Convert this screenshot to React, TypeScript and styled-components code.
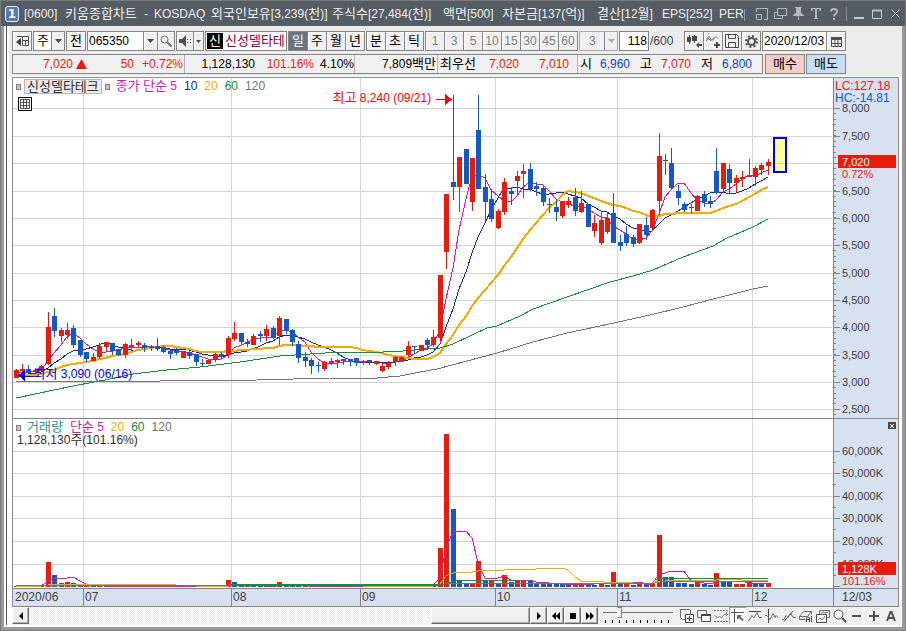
import React from "react";
import styled, { createGlobalStyle, css } from "styled-components";

const RED = "#e81c0c";
const BLUE = "#1458c8";
const MAGENTA = "#d818b0";
const NAVY = "#1428a0";
const AMBER = "#f0ac00";
const GREEN = "#109038";
const GREY = "#747474";
const LINE = "#848484";
const GRID = "#d4d4d4";
const AXIS_BG = "#d7e1ef";

const Global = createGlobalStyle`
  * { box-sizing: border-box; }
  body { margin: 0; }
  body, button, input, select {
    font: 12px/16px "Liberation Sans", "Noto Sans CJK KR", sans-serif;
    color: #000;
  }
  button, input, select { margin: 0; padding: 0; border-radius: 0; }
  svg { display: block; flex: none; }
`;

/* Hangul is set one size up, so that it stands level with the figures. */
const Hangul = styled.span`
  font-size: 13px;
  line-height: 1;
`;
const Mixed = ({ children }: { children: string }) => (
  <span>
    {children.split(/([가-힣]+)/).map((part, i) => (i % 2 ? <Hangul key={i}>{part}</Hangul> : part))}
  </span>
);

/* ---------- data ---------- */

// [direction, high, body top, body bottom, low] on the chart's vertical scale
type Candle = [string, number, number, number, number];
const candles: Candle[] = `
R 369 370 378 378;R 364 369 371 372;B 365 369 373 373;R 368 370 372 372;R 365 366 371 371;R 312 327 364 365
B 308 316 331 337;R 328 330 336 342;R 323 330 335 339;B 325 328 345 348;B 340 340 355 357;B 352 352 359 362
R 353 357 361 361;R 343 346 357 359;R 342 342 347 352;B 343 343 351 355;B 349 349 355 356;R 343 344 355 358
R 339 345 347 350;R 341 343 345 347;B 343 345 348 352;B 345 347 348 351;B 338 346 349 351;B 345 347 352 353
B 350 351 354 359;B 348 350 353 355;R 351 351 358 358;B 350 352 356 359;B 354 354 362 366;B 359 363 364 367
R 359 360 364 364;R 353 354 360 362;B 352 354 357 359;R 336 338 355 358;R 322 333 339 341;B 333 333 342 344
B 339 342 344 347;R 334 336 345 345;B 331 334 336 342;R 325 329 336 341;B 326 328 338 339;R 316 318 336 345
B 319 319 331 334;B 329 330 342 346;B 341 344 358 363;B 352 357 361 367;B 358 360 366 374;B 362 365 366 372
R 361 362 369 371;R 358 361 363 365;R 359 360 362 368;B 359 359 361 365;B 359 359 361 366;B 358 358 363 366
R 360 361 363 365;B 360 360 362 365;R 361 361 364 365;R 364 366 371 372;R 361 363 367 369;R 356 357 362 366
R 356 357 362 362;R 341 346 355 357;B 346 346 347 354;R 345 345 351 351;B 338 340 345 350;R 330 337 345 347
R 275 275 338 344;R 194 194 252 269;B 95 182 187 200;R 157 157 187 212;B 149 149 184 184;R 158 158 202 211
B 95 130 189 189;B 174 187 202 221;B 189 199 219 222;R 209 211 228 229;R 178 182 212 215;B 187 191 194 205
R 171 176 181 195;R 164 171 174 198;B 163 169 189 191;B 182 186 189 196;B 186 188 202 206;B 198 204 205 213
B 200 207 212 221;R 201 201 216 218;R 197 201 205 208;B 188 197 211 216;R 191 203 212 213;B 204 204 227 227
R 215 223 231 237;R 212 220 243 245;R 213 218 232 234;B 193 213 243 243;B 235 242 246 251;B 226 234 243 246
B 235 237 244 247;R 224 224 243 244;B 217 225 235 240;R 209 210 228 231;R 133 156 201 215;B 154 160 161 175
B 148 163 188 189;B 185 191 198 205;B 202 204 210 212;R 204 207 208 214;R 195 196 211 211;B 191 194 202 207
B 196 201 204 208;B 148 171 193 194;R 163 163 189 192;B 164 169 183 193;R 175 178 183 193;R 171 177 179 187
R 159 176 177 177;R 166 168 177 186;R 163 165 170 175;R 159 162 166 175`
  .trim()
  .split(/[;\n]/)
  .map((s) => {
    const [d, ...n] = s.trim().split(" ");
    return [d, ...n.map(Number)] as Candle;
  });

// bar height per day; a negative value is a day with less volume than the one before
const volumes = [
  -1, -1, 1, -1, 1, 25, -12, -4, 5, -4, -3, 1, -1, 1, -1, 3, -1, -1, -1, 1, -1, -1, 1, -1, -1, -1, 1, -1, 1, -1,
  -1, 1, 1, 7, -5, -1, 2, -1, -1, 2, -1, 5, -2, -1, -1, 1, 1, -1, -1, 1, -1, -1, 1, -1, 1, -1, -1, 1, 1, -1,
  1, 2, -1, -1, 1, 3, 39, 153, -78, -7, -4, 3, 26, -6, 6, -4, 12, -5, 6, 6, -6, -3, -3, -3, -4, -3, -2, 4, 4, -4,
  -2, 4, -2, 15, -3, 3, -2, 3, -3, 3, 52, -10, -10, -4, -4, -3, 5, -3, -2, 14, -6, -5, 3, 3, 5, -3, -3, 4,
];

const barX = (i: number) => Math.floor(16 + i * 6.43);

const average = (values: number[], n: number, before: number) =>
  values
    .map((_, i) => {
      let sum = 0;
      for (let k = 0; k < n; k++) sum += i - k >= 0 ? values[i - k] : before;
      return `${barX(i)},${Math.round(sum / n)}`;
    })
    .join(" ");

const closes = candles.map(([d, , top, bottom]) => (d === "R" ? top : bottom));
const volumeTops = volumes.map((v) => 587 - Math.abs(v));

const months = [
  { label: "2020/06", start: 13, span: 70 },
  { label: "07", start: 83, span: 148 },
  { label: "08", start: 231, span: 129 },
  { label: "09", start: 360, span: 135 },
  { label: "10", start: 495, span: 122 },
  { label: "11", start: 617, span: 135 },
  { label: "12", start: 752, span: 81 },
];

const priceGrid: [string, number][] = [
  ["8,000", 108], ["7,500", 136], ["7,000", 163], ["6,500", 191], ["6,000", 218], ["5,500", 245],
  ["5,000", 273], ["4,500", 300], ["4,000", 327], ["3,500", 355], ["3,000", 382], ["2,500", 409],
];
const volumeGrid: [string, number][] = [
  ["60,000K", 451], ["50,000K", 473], ["40,000K", 496], ["30,000K", 518], ["20,000K", 541], ["10,000K", 564],
];

/* ---------- window frame ---------- */

const Window = styled.div`
  min-height: 100vh;
  background: #9c9a98;
  border: 1px solid #7c7c7c;
  display: flex;
  flex-direction: column;
`;
const TitleBar = styled.header`
  height: 25px;
  background: #555c64;
  display: flex;
  align-items: center;
  padding: 0 3px 0 4px;
  color: #f0f0f0;
`;
const WindowNumber = styled.span`
  width: 14px;
  height: 16px;
  border: 1px solid #e8ecf4;
  border-radius: 3px;
  background: #5878b8;
  font: bold 12px/14px "DejaVu Sans", sans-serif;
  text-align: center;
  color: #fff;
`;
const TitleText = styled.h1`
  flex: 1;
  min-width: 0;
  height: 18px;
  margin: 0 10px 0 5px;
  overflow: hidden;
  display: grid;
  grid-template-columns: 41px 79px 10px 57px 121px 111px 59px 95px 65px 57px 60px;
  font-size: 12px;
  line-height: 18px;
  font-weight: normal;
  white-space: nowrap;
`;
const WindowButtons = styled.div`
  display: flex;
  align-items: center;
  gap: 4px;
`;
const Bare = styled.button`
  border: 0;
  background: none;
  display: grid;
  place-items: center;
  width: 14px;
  height: 18px;
`;
const TitleDivider = styled.span`
  width: 1px;
  height: 14px;
  background: #8a9096;
  margin: 0 1px;
`;
const Body = styled.main`
  flex: 1;
  margin: 0 3px 3px;
  border-left: 2px solid #fff;
  background: #fff;
`;
const Inner = styled.div`
  border-left: 1px solid #585858;
  padding-left: 2px;
`;

/* ---------- tool bars ---------- */

const Bars = styled.div`
  background: #ececec;
  padding: 5px 3px 2px;
  display: grid;
  gap: 3px;
  margin-bottom: 1px;
`;
const Bar = styled.div`
  display: flex;
  height: 20px;
  white-space: nowrap;
`;
const Group = styled.div<{ $w?: number; $white?: boolean; $muted?: boolean }>`
  display: flex;
  flex: none;
  position: relative;
  ${(p) => p.$w && css`width: ${p.$w}px;`}
  margin-right: 1px;
  border: 1px solid ${(p) => (p.$muted ? "#a8a8a8" : LINE)};
  background: ${(p) => (p.$white ? "#fff" : "#f0f0f0")};
`;
const ToolButton = styled.button<{ $on?: boolean; $muted?: boolean; $w?: number }>`
  width: ${(p) => p.$w ?? 19}px;
  flex: none;
  border: 0;
  border-left: 1px solid ${LINE};
  box-shadow: inset 1px 1px 0 #fff;
  background: #f0f0f0;
  display: grid;
  place-items: center;
  color: ${(p) => (p.$muted ? "#808080" : "#000")};
  &:first-child { border-left: 0; width: ${(p) => (p.$w ?? 19) - 1}px; }
  ${(p) => p.$on && css`background: #687484; color: #fff; box-shadow: none;`}
`;
const Field = styled.input<{ $right?: boolean }>`
  flex: 1;
  min-width: 0;
  border: 0;
  padding: 0 1px;
  background: #fff;
  text-align: ${(p) => (p.$right ? "right" : "left")};
`;
const Select = styled.select<{ $muted?: boolean }>`
  appearance: none;
  width: 100%;
  border: 0;
  padding-left: ${(p) => (p.$muted ? 9 : 3)}px;
  font-size: ${(p) => (p.$muted ? 12 : 13)}px;
  background: ${(p) => (p.$muted ? "#f0f0f0" : "#fff")};
  color: ${(p) => (p.$muted ? "#808080" : "#000")};
  opacity: 1;
`;
const SelectArrow = styled.span`
  position: absolute;
  right: 0;
  top: 0;
  width: 13px;
  height: 18px;
  border-left: 1px solid ${LINE};
  background: #f0f0f0;
  display: grid;
  place-items: center;
  pointer-events: none;
`;
const Badge = styled.span`
  width: 16px;
  margin: 1px;
  background: #000;
  color: #fff;
  font-size: 13px;
  text-align: center;
`;
const StockName = styled.span`
  flex: 1;
  color: #800040;
  font-size: 13px;
  line-height: 18px;
  padding-left: 1px;
`;
const Total = styled.span`
  width: 34px;
  line-height: 20px;
  color: #404040;
`;
const Quotes = styled.dl`
  display: flex;
  flex: none;
  width: 751px;
  margin: 0 1px 0 0;
  border: 1px solid ${LINE};
  background: #f0f0f0;
  line-height: 18px;
`;
const QuoteSet = styled.div<{ $w: number }>`
  display: flex;
  flex: none;
  width: ${(p) => p.$w}px;
  border-right: 1px solid #b4b4b4;
  &:last-child { border-right: 0; }
`;
const Quote = styled.dd<{ $w: number; $c?: string }>`
  width: ${(p) => p.$w}px;
  margin: 0;
  flex: none;
  text-align: right;
  color: ${(p) => p.$c ?? "#000"};
`;
const QuoteName = styled.dt<{ $w: number }>`
  width: ${(p) => p.$w}px;
  flex: none;
  padding-left: 2px;
`;
const Rise = styled.span`
  margin: 4px 0 0 3px;
  width: 11px;
`;
const Order = styled.button<{ $bg: string }>`
  width: 40px;
  margin-left: 1px;
  border: 1px solid ${LINE};
  background: ${(p) => p.$bg};
`;

/* ---------- chart ---------- */

const Chart = styled.section`
  margin: 0 3px;
  border: 1px solid #8c8c8c;
  border-bottom: 0;
`;
const Pane = styled.div`
  display: flex;
  border-bottom: 1px solid ${LINE};
`;
const Plot = styled.div`
  position: relative;
  flex: 1;
  min-width: 0;
  & > svg { width: 100%; }
`;
const Axis = styled.div`
  flex: none;
  width: 65px;
  position: relative;
  background: ${AXIS_BG};
`;
const AxisText = styled.text<{ $large?: boolean }>`
  font-size: ${(p) => (p.$large ? 12 : 11)}px;
`;
const Legend = styled.div`
  position: absolute;
  left: 3px;
  top: 1px;
  display: flex;
  align-items: center;
  gap: 7px;
  line-height: 15px;
  white-space: nowrap;
`;
const Key = styled.span<{ $c: string; $pull?: boolean }>`
  color: ${(p) => p.$c};
  ${(p) => p.$pull && css`margin-left: -1px;`}
`;
const Handle = styled.i`
  width: 5px;
  height: 6px;
  border: 1px solid #808080;
  background: #c8c8c8;
`;
const NameTag = styled.button`
  height: 15px;
  margin: 0 -4px;
  padding: 0 2px;
  border: 1px solid #b8b8b8;
  background: #ebebeb;
  font-size: 13px;
  line-height: 13px;
  color: #303030;
`;
const TableButton = styled.button`
  position: absolute;
  left: 5px;
  top: 19px;
  width: 14px;
  height: 14px;
  border: 1px solid #000;
  background: #fff;
  display: grid;
  place-items: center;
`;
const VolumeNow = styled.div`
  position: absolute;
  left: 4px;
  top: 14px;
  line-height: 15px;
  color: #303030;
`;
const HighNote = styled.span`
  position: absolute;
  right: 49%;
  top: 12px;
  color: #f00;
  white-space: nowrap;
`;
const LowNote = styled.span`
  position: absolute;
  left: 2.5%;
  top: 288px;
  color: #0000f0;
  white-space: nowrap;
`;
const PaneClose = styled.button`
  position: absolute;
  right: 2px;
  top: 3px;
  width: 8px;
  height: 7px;
  border: 0;
  background: #484848;
  display: grid;
  place-items: center;
`;
const Dates = styled.div`
  display: flex;
  height: 18px;
  background: ${AXIS_BG};
  border-bottom: 1px solid ${LINE};
  color: #404040;
`;
const MonthRow = styled.div`
  flex: 1;
  display: grid;
  grid-template-columns: ${months.map((m) => `${m.span}fr`).join(" ")};
`;
const Month = styled.span`
  padding-left: 1px;
  border-left: 1px solid ${LINE};
  &:first-child { border-left: 0; padding-left: 2px; }
`;
const LastDate = styled.span`
  width: 65px;
  padding-left: 8px;
  border-left: 1px solid ${LINE};
`;

/* ---------- bottom bar ---------- */

const Bottom = styled.footer`
  margin: 0 1px 0 3px;
  padding-right: 2px;
  height: 18px;
  display: flex;
  background: #f0f0f0;
`;
const Track = styled.div`
  flex: 1;
  display: flex;
  justify-content: flex-end;
  background: repeating-conic-gradient(#e9e9e9 0 25%, #fff 0 50%) 0 0 / 2px 2px;
`;
const Raised = styled.button<{ $w: number }>`
  width: ${(p) => p.$w}px;
  height: 17px;
  flex: none;
  border: 1px solid;
  border-color: #fff #686868 #686868 #fff;
  box-shadow: inset -1px -1px 0 #b0b0b0;
  background: #f0f0f0;
  display: grid;
  place-items: center;
`;
const Zoom = styled.div`
  width: 70px;
  margin: 0 5px;
  flex: none;
`;
const Range = styled.input`
  appearance: none;
  display: block;
  width: 100%;
  height: 11px;
  background: linear-gradient(#707070, #707070) 0 5px / 100% 1px no-repeat;
  &::-webkit-slider-thumb {
    appearance: none;
    width: 5px;
    height: 11px;
    background: #f0f0f0;
    border: 1px solid #808080;
    border-left-color: #fff;
  }
`;
const Ticks = styled.div`
  height: 3px;
  margin: 2px 0 0 2px;
  background: repeating-linear-gradient(90deg, #000 0 1px, transparent 1px 7px);
`;
const Tool = styled.button<{ $on?: boolean }>`
  width: 17px;
  height: 17px;
  flex: none;
  border: 0;
  background: ${(p) => (p.$on ? "#fff" : "none")};
  ${(p) => p.$on && css`border-left: 1px solid #a0a0a0; border-top: 1px solid #a0a0a0;`}
  display: grid;
  place-items: center;
`;

/* ---------- icons ---------- */

const Glyph = ({ w = 14, h = 14, c = "#505050", f = "none", children }: {
  w?: number; h?: number; c?: string; f?: string; children: React.ReactNode;
}) => (
  <svg width={w} height={h} viewBox={`0 0 ${w} ${h}`} fill={f} stroke={c} aria-hidden="true">
    {children}
  </svg>
);
const Down = ({ c = "#484848" }: { c?: string }) => (
  <Glyph w={7} h={4} c="none" f={c}><path d="M0 0h7L3.5 4z" /></Glyph>
);

const bottomTools: { name: string; on?: boolean; art: React.ReactNode }[] = [
  { name: "새 차트", art: <Glyph c="#686868"><path d="M5 10.500H2.500L.5 8.500v-8h9l1 1V5" /><path d="M5.500 5.500h8v8h-8zM9.500 7v5M7 9.500h5" stroke="#484848" /></Glyph> },
  { name: "차트 겹치기", art: <Glyph c="#686868"><path d="M.5 1.500h9v7h-9z" /><path d="M4.500 5.500h9v7h-9z" fill="#fff" stroke="#484848" /><path d="M4 6h10" stroke="#484848" strokeWidth="2" /></Glyph> },
  { name: "영역", art: <Glyph c="#808080"><path d="M0 1.500h14M0 12.500h14" strokeDasharray="2 1" /><path d="M.5 6l3 3 2-2 2 2 3-4M12.500 3v4M11 5.500h3" /></Glyph> },
  { name: "십자선", on: true, art: <Glyph c="#585858"><path d="M0 3.500h13M3.500 0v14" /><path d="M6 6h5L9.500 7.500 13 11l-1.500 1L8 9l-2 2z" fill="#686868" stroke="none" /></Glyph> },
  { name: "추세선", art: <Glyph c="#707070"><path d="M1 2.500h12" stroke="#484848" /><path d="M0 11.500h1l3-5 2 2 3-5 2 5h3" /></Glyph> },
  { name: "수직선", art: <Glyph c="#707070"><path d="M3.500 0v14" stroke="#484848" /><path d="M0 6.500h2l3 4 3-6 2 4 1-2 2 2" /></Glyph> },
  { name: "선 그리기", art: <Glyph c="#707070"><path d="M2 12.500L11 2" stroke="#484848" /><path d="M0 10.500h2l2-4 2 2 3-4 2 4h3" /></Glyph> },
  { name: "전체 지우기", art: <Glyph c="#707070"><path d="M.5 7.500l4-5h8l-4 5zM.5 7.500v3h6M12.500 2.500v3" /><path d="M7.500 13V9l1.500-1.500L10.500 9v4M7.500 10.500h3M12.500 7v6" stroke="#484848" /></Glyph> },
  { name: "차트 저장", art: <Glyph c="#707070"><path d="M3.500 5V1.500h10v7H11" /><path d="M.5 5.500h10v8H.5z" fill="#fff" stroke="#484848" /><path d="M2 11l2-2 2 2 3-4M5 4l2-1 2 1 3-1" /></Glyph> },
  { name: "돋보기", art: <Glyph><circle cx="5.500" cy="5.500" r="4.500" /><path d="M9 9l4 4" strokeWidth="2" /></Glyph> },
  { name: "축소", art: <Glyph><path d="M2 7h9" strokeWidth="2" /></Glyph> },
  { name: "확대", art: <Glyph><path d="M2 7h10M7 2v10" strokeWidth="2" /></Glyph> },
  { name: "글자", art: <Glyph><path d="M3 12L6.500 3h1L11 12M4 9h6" strokeWidth="2" /></Glyph> },
];

/* ---------- parts ---------- */

const titleParts = [
  "[0600]", "키움종합차트", "-", "KOSDAQ", "외국인보유[3,239(천)]", "주식수[27,484(천)]",
  "액면[500]", "자본금[137(억)]", "결산[12월]", "EPS[252]", "PER[2",
];

const Title = () => (
  <TitleBar>
    <WindowNumber>1</WindowNumber>
    <TitleText>{titleParts.map((t) => <Mixed key={t}>{t}</Mixed>)}</TitleText>
    <WindowButtons>
      <Bare aria-label="창 크기"><Glyph w={12} h={12} c="#b4b8bc"><path d="M.5 4V.5h11v11H8M.5 6.500h5v5h-5z" /></Glyph></Bare>
      <Bare aria-label="창 복제"><Glyph w={13} h={12} c="#b4b8bc"><path d="M3.500.5h9v7h-9zM3 4.500H.5v6h8V8" /></Glyph></Bare>
      <Bare aria-label="고정"><Glyph w={11} h={13} c="none" f="#b4b8bc"><path d="M2 0h7v1H8v5l3 2v1H6v4H5V9H0V8l3-2V1H2z" /></Glyph></Bare>
      <Bare aria-label="글꼴"><Glyph w={10} h={11} c="none" f="#b4b8bc"><path d="M0 0h10v3H9L8 1H6v9h1v1H3v-1h1V1H2L1 3H0z" /></Glyph></Bare>
      <Bare aria-label="도움말"><Glyph w={9} h={12} c="#b4b8bc"><path d="M1 3.500Q1 1 4 1t3 2.500Q7 5 5.500 6T4 8.500M4 10v2" strokeWidth="2" /></Glyph></Bare>
      <TitleDivider />
      <Bare aria-label="최소화"><Glyph w={10} h={12} c="#c8ccd0"><path d="M0 10h10" strokeWidth="2" /></Glyph></Bare>
      <Bare aria-label="최대화"><Glyph w={10} h={10} c="#c8ccd0"><path d="M.5 1h9v8.500h-9zM0 2h10" /></Glyph></Bare>
      <Bare aria-label="닫기"><Glyph w={9} h={9} c="#c8ccd0"><path d="M.5.5l8 8M8.500.5l-8 8" /></Glyph></Bare>
    </WindowButtons>
  </TitleBar>
);

const Controls = () => (
  <Bar>
    <Group $w={20}>
      <ToolButton aria-label="목록"><Glyph w={13} h={12}><path d="M1 1.500h11.500v9H6.500V1M6 5.500h6M9.500 5v5" /><path d="M5 3v8L0 7z" fill="#404040" stroke="none" /></Glyph></ToolButton>
    </Group>
    <Group $w={32} $white>
      <Select aria-label="종류"><option>주</option></Select>
      <SelectArrow><Down /></SelectArrow>
    </Group>
    <Group $w={20}><ToolButton><Mixed>전</Mixed></ToolButton></Group>
    <Group $w={88} $white>
      <Field aria-label="종목코드" defaultValue="065350" />
      <ToolButton $w={14} aria-label="종목 목록"><Down /></ToolButton>
      <ToolButton $w={17} aria-label="종목 검색"><Glyph w={12} h={12} c="#707070"><circle cx="4.500" cy="4.500" r="3.500" /><path d="M7 7l4.500 4.500" strokeWidth="2" /></Glyph></ToolButton>
    </Group>
    <Group $w={28}>
      <ToolButton $w={17} aria-label="소리"><Glyph w={12} h={12} c="none" f="#505050"><path d="M0 4h3l4-4v12L3 8H0zM8 4h1v1H8zM8 7h1v1H8zM11 4h1v1h-1zM11 7h1v1h-1z" /></Glyph></ToolButton>
      <ToolButton $w={10} aria-label="소리 설정"><Glyph w={5} h={3} c="none" f="#484848"><path d="M0 0h5L2.500 3z" /></Glyph></ToolButton>
    </Group>
    <Group $w={82} $white>
      <Badge>신</Badge>
      <StockName>신성델타테</StockName>
    </Group>
    <Group>
      {["일", "주", "월", "년"].map((t, i) => <ToolButton key={t} $on={i === 0}><Mixed>{t}</Mixed></ToolButton>)}
    </Group>
    <Group>{["분", "초", "틱"].map((t) => <ToolButton key={t}><Mixed>{t}</Mixed></ToolButton>)}</Group>
    <Group>
      {[1, 3, 5, 10, 15, 30, 45, 60].map((t) => <ToolButton key={t} $muted>{t}</ToolButton>)}
    </Group>
    <Group $w={39} $muted>
      <Select $muted disabled aria-label="간격"><option>3</option></Select>
      <SelectArrow><Down c="#a8a8a8" /></SelectArrow>
    </Group>
    <Group $w={30} $white><Field aria-label="표시 개수" $right defaultValue="118" /></Group>
    <Total>/600</Total>
    <Group>
      <ToolButton aria-label="봉 추가"><Glyph w={15} h={13} c="none" f="#484848"><path d="M0 2h2V0h1v2h1v5H3v2H2V7H0zM7 0h1v1h2v5H8v2H7V6H5V1h2zM9 10l3-3v2h3v2h-3v2z" /></Glyph></ToolButton>
      <ToolButton aria-label="지표 추가"><Glyph w={15} h={13} c="#707070"><path d="M0 4.500l3-3 3 4 4-4 2 2M0 6.500l2-3 3 2 3-3" /><path d="M11 7v6M8 10h6" stroke="#484848" strokeWidth="2" /></Glyph></ToolButton>
      <ToolButton aria-label="저장"><Glyph c="#484848"><path d="M.5.5h11l2 2v11H.5zM3.500.5v4h7v-4M3.500 13V8.500h7V13" /></Glyph></ToolButton>
      <ToolButton aria-label="설정"><Glyph w={13} h={13}><circle cx="6.500" cy="6.500" r="3.500" strokeWidth="2" /><circle cx="6.500" cy="6.500" r="5.500" strokeWidth="2" strokeDasharray="2 2.300" /></Glyph></ToolButton>
    </Group>
    <Group $w={84} $white>
      <Field aria-label="날짜" defaultValue="2020/12/03" />
      <ToolButton aria-label="달력"><Glyph w={11} h={11}><path d="M.5 2v8.500h10V2M4 4v6M7 4v6M1 7.500h9" /><path d="M0 2.500h11" strokeWidth="3" /></Glyph></ToolButton>
    </Group>
  </Bar>
);

const QuoteBar = () => (
  <Bar>
    <Quotes>
      <QuoteSet $w={172}>
        <Quote $w={60} $c={RED}>7,020</Quote>
        <Rise><Glyph w={11} h={10} c="none" f={RED}><path d="M5.500 0L11 10H0z" /></Glyph></Rise>
        <Quote $w={47} $c={RED}>50</Quote>
        <Quote $w={49} $c={RED}>+0.72%</Quote>
      </QuoteSet>
      <QuoteSet $w={170}>
        <Quote $w={70}>1,128,130</Quote>
        <Quote $w={59} $c={RED}>101.16%</Quote>
        <Quote $w={40}>4.10%</Quote>
      </QuoteSet>
      <QuoteSet $w={83}><Quote $w={81}><Mixed>7,809백만</Mixed></Quote></QuoteSet>
      <QuoteSet $w={140}>
        <QuoteName $w={40}><Mixed>최우선</Mixed></QuoteName>
        <Quote $w={41} $c={RED}>7,020</Quote>
        <Quote $w={50} $c={RED}>7,010</Quote>
      </QuoteSet>
      <QuoteSet $w={184}>
        <QuoteName $w={20}><Mixed>시</Mixed></QuoteName>
        <Quote $w={32} $c="#1040c0">6,960</Quote>
        <Quote $w={22}><Mixed>고</Mixed></Quote>
        <Quote $w={39} $c={RED}>7,070</Quote>
        <Quote $w={22}><Mixed>저</Mixed></Quote>
        <Quote $w={39} $c="#1040c0">6,800</Quote>
      </QuoteSet>
    </Quotes>
    <Order $bg="#f4ccc8"><Mixed>매수</Mixed></Order>
    <Order $bg="#c8def4"><Mixed>매도</Mixed></Order>
  </Bar>
);

const Grid = ({ rows, top, bottom }: { rows: [string, number][]; top: number; bottom: number }) => (
  <g stroke={GRID}>
    {rows.map(([k, y]) => <path key={k} d={`M13 ${y}.500H832`} />)}
    {months.slice(1).map((m) => <path key={m.label} d={`M${m.start}.500 ${top}V${bottom}`} />)}
  </g>
);

const PricePlot = () => (
  <svg height="340" viewBox="13 78 820 340" preserveAspectRatio="none" shapeRendering="crispEdges" fill="none">
    <Grid rows={priceGrid} top={78} bottom={418} />
    <polyline stroke={MAGENTA} points={average(closes, 5, 374)} />
    <polyline stroke={NAVY} points={average(closes, 10, 375)} />
    <polyline stroke={AMBER} strokeWidth="2" points={average(closes, 20, 376)} />
    <polyline stroke={GREEN} points="16,398 73,386 110,379 133,374 167,370 200,367 240,362 280,356 310,354 340,352 383,352 403,351 440,348 453,344 472,335 487,328 497,326 520,316 533,309 550,303 567,297 590,289 610,282 633,276 653,270 683,257 713,246 727,238 753,227 768,219" />
    <polyline stroke={GREY} points="16,382 160,381 257,380 330,378 377,378 400,376 420,372 437,369 467,361 497,353 533,342 567,333 600,326 650,315 683,307 713,299 733,294 753,289 768,286" />
    {candles.map(([d, high, top, bottom, low], i) => {
      const x = barX(i);
      return (
        <g key={i} fill={d === "R" ? RED : BLUE}>
          <rect x={x} y={high} width="1" height={Math.max(low - high, 1)} />
          <rect x={x - 2} y={top} width="5" height={bottom - top} />
        </g>
      );
    })}
    <path d="M436 99.500h9" stroke="#f00" />
    <path d="M445 94v11l7-5.500z" fill="#f00" />
    <path d="M25 376h9" stroke="#00f" />
    <path d="M25 370v11l-7-5.500z" fill="#00f" />
    <rect x="774" y="138" width="12" height="34" fill="#ffff98" stroke="#0000f0" strokeWidth="2" />
    <path d="M775 163.500h10" stroke="#d8d890" />
  </svg>
);

const VolumePlot = () => (
  <svg height="169" viewBox="13 419 820 169" preserveAspectRatio="none" shapeRendering="crispEdges" fill="none">
    <Grid rows={volumeGrid} top={419} bottom={588} />
    {volumes.map((v, i) => (
      <rect key={i} x={barX(i) - 2} y={587 - Math.abs(v)} width="5" height={Math.abs(v)} fill={v > 0 ? RED : BLUE} />
    ))}
    <polyline stroke={MAGENTA} points={average(volumeTops, 5, 586)} />
    <polyline stroke={AMBER} points={average(volumeTops, 20, 586)} />
    <polyline stroke={GREY} points="16,586 440,585 450,583 560,583 655,583 660,582 768,581" />
    <polyline stroke={GREEN} strokeWidth="2" points="231,585 440,585" />
    <polyline stroke={GREEN} points="440,585 455,581 520,580 655,580 660,578 768,578" />
  </svg>
);

const PriceAxis = () => (
  <svg width="65" height="340" viewBox="833 78 65 340">
    <g stroke={LINE} shapeRendering="crispEdges">
      <path d="M833.500 78v340" />
      {priceGrid.map(([k, y]) => <path key={k} d={`M834 ${y}.500h6`} />)}
      {Array.from({ length: 57 }, (_, i) => {
        const y = Math.round(108 + i * 5.472);
        return <path key={i} d={`M834 ${y}.500h2`} />;
      })}
    </g>
    {priceGrid.map(([k, y]) => (k === "7,000" ? null : (
      <AxisText key={k} x="842" y={y + 4} fill="#404040">{k}</AxisText>
    )))}
    <rect x="834" y="79" width="63" height="25" fill={AXIS_BG} />
    <AxisText $large x="835" y="90" fill={RED}>LC:127.18</AxisText>
    <AxisText $large x="835" y="102" fill={BLUE}>HC:-14.81</AxisText>
    <rect x="838" y="155" width="58" height="13" fill={RED} />
    <AxisText x="842" y="166" fill="#fff">7,020</AxisText>
    <AxisText x="842" y="178" fill={RED}>0.72%</AxisText>
  </svg>
);

const VolumeAxis = () => (
  <svg width="65" height="169" viewBox="833 419 65 169">
    <g stroke={LINE} shapeRendering="crispEdges">
      <path d="M833.500 419v169M834 586.500h6" />
      {volumeGrid.map(([k, y]) => <path key={k} d={`M834 ${y}.500h6M834 ${y + 11}.500h2`} />)}
    </g>
    {volumeGrid.map(([k, y]) => <AxisText key={k} x="842" y={y + 4} fill="#404040">{k}</AxisText>)}
    <rect x="838" y="562" width="58" height="13" fill={RED} />
    <AxisText x="842" y="573" fill="#fff">1,128K</AxisText>
    <AxisText x="842" y="585" fill={RED}>101.16%</AxisText>
  </svg>
);

export default function App() {
  return (
    <Window>
      <Global />
      <Title />
      <Body>
        <Inner>
          <Bars>
            <Controls />
            <QuoteBar />
          </Bars>
          <Chart>
            <Pane>
              <Plot>
                <PricePlot />
                <Legend>
                  <Handle />
                  <NameTag>신성델타테크</NameTag>
                  <Handle />
                  <Key $c={MAGENTA} $pull><Mixed>종가 단순 5</Mixed></Key>
                  <Key $c={NAVY}>10</Key>
                  <Key $c={AMBER}>20</Key>
                  <Key $c={GREEN}>60</Key>
                  <Key $c={GREY}>120</Key>
                </Legend>
                <TableButton aria-label="표 보기"><Glyph w={10} h={10}><path d="M.5.5h9v9h-9zM.5 3.500h9M.5 6.500h9M3.500.5v9M6.500.5v9" /></Glyph></TableButton>
                <HighNote><Mixed>최고 8,240 (09/21)</Mixed></HighNote>
                <LowNote><Mixed>최저 3,090 (06/16)</Mixed></LowNote>
              </Plot>
              <Axis><PriceAxis /></Axis>
            </Pane>
            <Pane>
              <Plot>
                <VolumePlot />
                <Legend>
                  <Handle />
                  <Key $c="#309090" $pull><Mixed>거래량</Mixed></Key>
                  <Key $c={MAGENTA}><Mixed>단순 5</Mixed></Key>
                  <Key $c={AMBER}>20</Key>
                  <Key $c={GREEN}>60</Key>
                  <Key $c={GREY}>120</Key>
                </Legend>
                <VolumeNow><Mixed>1,128,130주(101.16%)</Mixed></VolumeNow>
              </Plot>
              <Axis>
                <VolumeAxis />
                <PaneClose aria-label="영역 닫기"><Glyph w={4} h={4} c="#fff"><path d="M0 0l4 4M4 0L0 4" /></Glyph></PaneClose>
              </Axis>
            </Pane>
            <Dates>
              <MonthRow>{months.map((m) => <Month key={m.label}>{m.label}</Month>)}</MonthRow>
              <LastDate>12/03</LastDate>
            </Dates>
          </Chart>
          <Bottom>
            <Raised $w={17} aria-label="왼쪽으로"><Glyph w={4} h={8} c="none" f="#000"><path d="M4 0v8L0 4z" /></Glyph></Raised>
            <Track><Raised $w={99} aria-label="스크롤 막대" /></Track>
            <Raised $w={17} aria-label="오른쪽으로"><Glyph w={4} h={8} c="none" f="#000"><path d="M0 0v8l4-4z" /></Glyph></Raised>
            <Raised $w={17} aria-label="처음으로"><Glyph w={8} h={8} c="none" f="#000"><path d="M4 0v8L0 4zM8 0v8L4 4z" /></Glyph></Raised>
            <Raised $w={17} aria-label="정지"><Glyph w={6} h={6} c="none" f="#000"><path d="M0 0h6v6H0z" /></Glyph></Raised>
            <Raised $w={17} aria-label="끝으로"><Glyph w={8} h={8} c="none" f="#000"><path d="M0 0v8l4-4zM4 0v8l4-4z" /></Glyph></Raised>
            <Zoom>
              <Range type="range" min="0" max="100" defaultValue="22" aria-label="확대 비율" />
              <Ticks />
            </Zoom>
            {bottomTools.map((t) => <Tool key={t.name} $on={t.on} aria-label={t.name}>{t.art}</Tool>)}
          </Bottom>
        </Inner>
      </Body>
    </Window>
  );
}
